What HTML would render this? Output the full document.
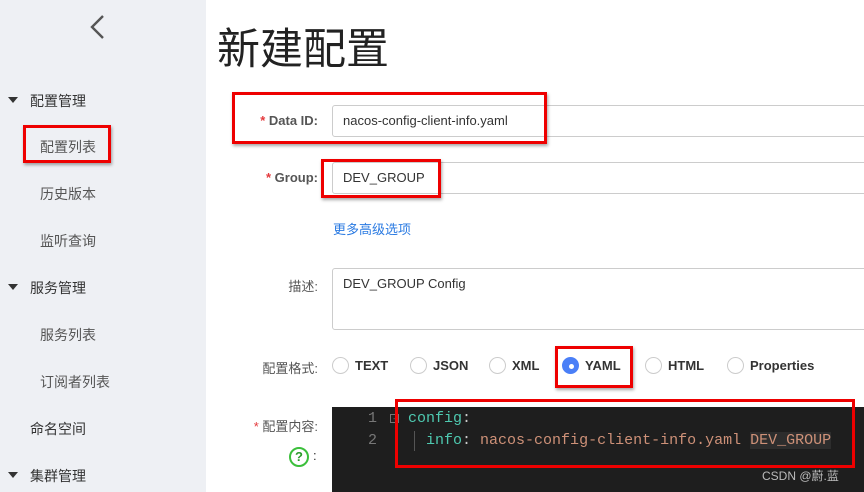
<!DOCTYPE html>
<html><head><meta charset="utf-8"><style>
*{margin:0;padding:0;box-sizing:border-box}
body{width:864px;height:492px;overflow:hidden;background:#fff;font-family:"Liberation Sans","Noto Sans CJK SC",sans-serif;position:relative;color:#333}
.a{position:absolute;white-space:nowrap}
#side{position:absolute;left:0;top:0;width:206px;height:492px;background:#eef0f4}
.si{font-size:14px;color:#555}
.tri{width:0;height:0;border-left:5px solid transparent;border-right:5px solid transparent;border-top:6px solid #333}
.lbl{font-size:13px;color:#555;text-align:right;width:120px}
.req{color:#e4393c}
.inp{border:1px solid #ccc;border-radius:3px;background:#fff;font-size:13px;color:#333;padding-left:10px}
.red{border:3px solid #e00;box-shadow:1px 2px 3px rgba(0,0,0,.35)}
.rad{width:17px;height:17px;border:1px solid #ccc;border-radius:50%;background:#fff}
.rt{font-size:13px;font-weight:bold;color:#333}
.code{font-family:"Liberation Mono","DejaVu Sans Mono",monospace;font-size:15px}
</style></head><body>
<div id="side"></div>
<svg class="a" style="left:88px;top:14px" width="18" height="26"><path d="M15 2 L4 13 L15 24" fill="none" stroke="#555" stroke-width="2.4"/></svg>
<div class="a tri" style="left:8px;top:97px"></div><div class="a si" style="left:30px;top:91px;color:#333">配置管理</div>
<div class="a si" style="left:40px;top:137px">配置列表</div>
<div class="a red" style="left:23px;top:125px;width:88px;height:38px"></div>
<div class="a si" style="left:40px;top:184px">历史版本</div>
<div class="a si" style="left:40px;top:231px">监听查询</div>
<div class="a tri" style="left:8px;top:284px"></div><div class="a si" style="left:30px;top:278px;color:#333">服务管理</div>
<div class="a si" style="left:40px;top:325px">服务列表</div>
<div class="a si" style="left:40px;top:372px">订阅者列表</div>
<div class="a si" style="left:30px;top:419px;color:#333">命名空间</div>
<div class="a tri" style="left:8px;top:472px"></div><div class="a si" style="left:30px;top:466px;color:#333">集群管理</div>

<div class="a" style="left:217px;top:15px;font-size:43px;color:#222">新建配置</div>

<div class="a lbl" style="left:198px;top:113px;font-weight:bold"><span class="req">* </span>Data ID:</div>
<div class="a inp" style="left:332px;top:105px;width:540px;height:32px;line-height:30px">nacos-config-client-info.yaml</div>
<div class="a red" style="left:232px;top:92px;width:315px;height:52px"></div>

<div class="a lbl" style="left:198px;top:170px;font-weight:bold"><span class="req">* </span>Group:</div>
<div class="a inp" style="left:332px;top:162px;width:540px;height:32px;line-height:30px">DEV_GROUP</div>
<div class="a red" style="left:321px;top:159px;width:120px;height:39px"></div>

<div class="a" style="left:333px;top:219px;font-size:13px;color:#2a7ae2">更多高级选项</div>

<div class="a lbl" style="left:198px;top:276px">描述:</div>
<div class="a inp" style="left:332px;top:268px;width:540px;height:62px;padding-top:7px">DEV_GROUP Config</div>

<div class="a lbl" style="left:198px;top:358px">配置格式:</div>
<div class="a rad" style="left:332px;top:357px"></div><div class="a rt" style="left:355px;top:358px">TEXT</div>
<div class="a rad" style="left:410px;top:357px"></div><div class="a rt" style="left:433px;top:358px">JSON</div>
<div class="a rad" style="left:489px;top:357px"></div><div class="a rt" style="left:512px;top:358px">XML</div>
<div class="a rad" style="left:562px;top:357px;background:#4a7ff7;border-color:#4a7ff7"></div><div class="a" style="left:569px;top:364px;width:5px;height:5px;border-radius:50%;background:#fff"></div><div class="a rt" style="left:585px;top:358px">YAML</div>
<div class="a red" style="left:555px;top:346px;width:78px;height:42px"></div>
<div class="a rad" style="left:645px;top:357px"></div><div class="a rt" style="left:668px;top:358px">HTML</div>
<div class="a rad" style="left:727px;top:357px"></div><div class="a rt" style="left:750px;top:358px">Properties</div>

<div class="a lbl" style="left:198px;top:416px"><span class="req">* </span>配置内容:</div>
<div class="a" style="left:289px;top:447px;width:20px;height:20px;border:2px solid #3bbf3b;border-radius:50%;color:#2a9a2a;font-size:13px;font-weight:bold;text-align:center;line-height:16px">?</div>
<div class="a" style="left:313px;top:448px;font-size:13px">:</div>

<div class="a" style="left:332px;top:407px;width:532px;height:85px;background:#1e1e1e"></div>
<div class="a code" style="left:368px;top:410px;color:#777">1</div>
<div class="a code" style="left:368px;top:432px;color:#777">2</div>
<div class="a" style="left:390px;top:414px;width:9px;height:9px;border:1px solid #777;font-size:8px;color:#777;line-height:7px;text-align:center">-</div>
<div class="a code" style="left:408px;top:410px;color:#4ec9b0">config<span style="color:#ccc">:</span></div>
<div class="a" style="left:414px;top:431px;width:1px;height:20px;background:#555"></div>
<div class="a code" style="left:426px;top:432px;color:#4ec9b0">info<span style="color:#ccc">:</span> <span style="color:#ce9178">nacos-config-client-info.yaml <span style="background:#2d2d2d">DEV_GROUP</span></span></div>
<div class="a red" style="left:395px;top:399px;width:460px;height:69px;box-shadow:none"></div>
<div class="a" style="left:762px;top:467px;font-size:12px;color:#bbb">CSDN @蔚.蓝</div>
</body></html>
